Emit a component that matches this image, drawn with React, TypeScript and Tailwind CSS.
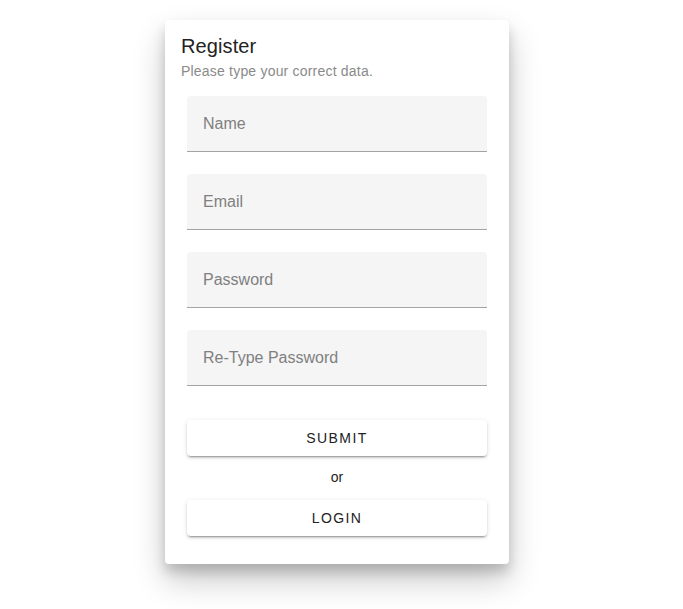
import React from 'react'

const fields = ['Name', 'Email', 'Password', 'Re-Type Password']

function Field({ label }: { label: string }) {
  return (
    <div className="flex h-[56px] w-[300px] items-center rounded-t-[4px] border-b border-[#a3a3a3] bg-[#f5f5f5] px-4">
      <span className="text-[16px] leading-5 text-[#808080]">{label}</span>
    </div>
  )
}

function Button({ children }: { children: React.ReactNode }) {
  return (
    <button className="h-9 w-[300px] rounded-[4px] bg-white text-[14px] leading-5 tracking-[0.1em] text-[#222] shadow-[0_3px_1px_-2px_rgba(0,0,0,0.2),0_2px_2px_0_rgba(0,0,0,0.14),0_1px_5px_0_rgba(0,0,0,0.12)]">
      {children}
    </button>
  )
}

export default function App() {
  return (
    <main className="min-h-[609px] bg-white pt-5 font-['Liberation_Sans',Arial,sans-serif]">
      <div className="ml-[165px] w-[344px] rounded-[4px] bg-white pb-[28px] shadow-[0_16px_32px_rgba(0,0,0,0.22),0_8px_12px_rgba(0,0,0,0.16)]">
        <div className="px-4 pt-4">
          <h1 className="text-[20px] leading-5 tracking-[0.1px] text-[#222]">Register</h1>
          <p className="mt-[5px] text-[14px] leading-5 tracking-[0.2px] text-[#8a8a8a]">Please type your correct data.</p>
        </div>

        <form className="mt-[15px] flex flex-col items-center">
          <div className="flex flex-col gap-[22px]">
            {fields.map((f) => (
              <Field key={f} label={f} />
            ))}
          </div>

          <div className="mt-[34px]">
            <Button>SUBMIT</Button>
          </div>
          <div className="flex h-[44px] items-center justify-center pb-[2px] text-[14px] leading-5 text-[#222]">or</div>
          <Button>LOGIN</Button>
        </form>
      </div>
    </main>
  )
}
